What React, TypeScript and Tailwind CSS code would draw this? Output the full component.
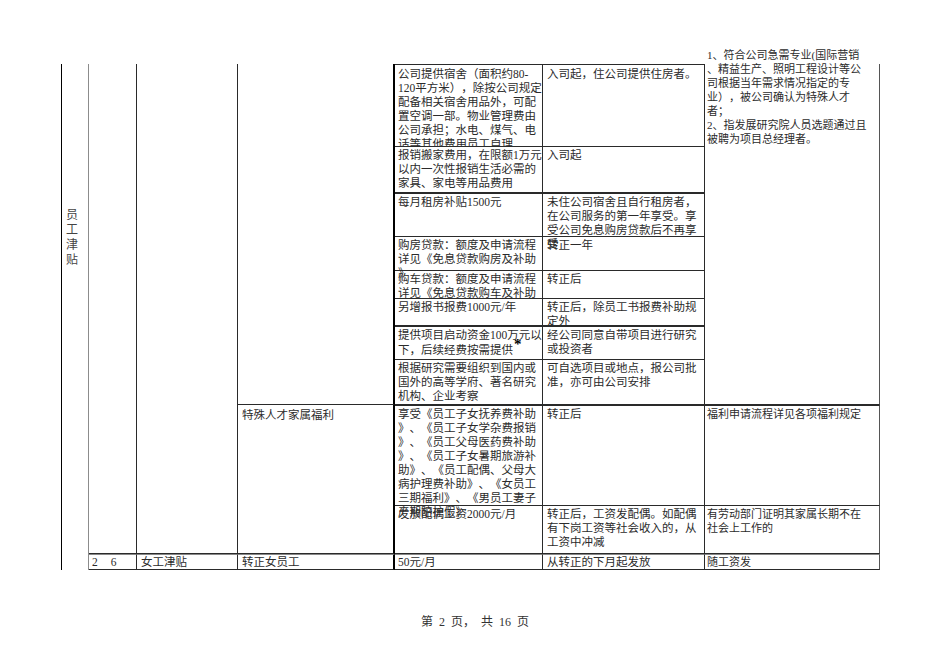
import React from "react";

const F = { fontFamily: '"Liberation Serif", "Noto Sans CJK SC", serif' };

function Lines({ lines, className = "" }: { lines: React.ReactNode[]; className?: string }) {
  return (
    <div className={"whitespace-nowrap " + className}>
      {lines.map((l, i) => (
        <div key={i} className="h-[14px] leading-[14px]">
          {l}
        </div>
      ))}
    </div>
  );
}

const B = "border-[#2a2a2a]";

export default function App() {
  return (
    <div
      className="w-[950px] h-[672px] bg-white text-[#2b2b2b] text-[11.5px] overflow-hidden [text-spacing-trim:space-all]"
      style={F}
    >
      <div className="pt-[64px] pl-[61px]">
        <div className="grid grid-cols-[28px_48px_101px_157px_148px_162px_175px] grid-rows-[83px_46px_44px_34px_28px_27px_34px_45px_101px_48px_16px]">
          {/* col 1 */}
          <div className="col-start-1 row-start-1 row-span-11 border-l border-l-black border-r border-r-[#8c8c8c] flex flex-col items-center pt-[144px] pr-[6px] text-[12px] leading-[15px] text-[#444]">
            <span>员</span>
            <span>工</span>
            <span>津</span>
            <span>贴</span>
          </div>
          {/* col 2,3 empty */}
          <div className={`col-start-2 row-start-1 row-span-10 border-r border-b ${B}`} />
          <div className={`col-start-3 row-start-1 row-span-10 border-r border-b ${B}`} />
          {/* col 4 */}
          <div className={`col-start-4 row-start-1 row-span-8 border-r-2 border-r-black border-b ${B}`} />
          <div className={`col-start-4 row-start-9 row-span-2 border-r-2 border-r-black border-b ${B} pl-[4px] pt-[3px]`}>
            <Lines lines={["特殊人才家属福利"]} />
          </div>

          {/* col 5/6 rows */}
          <div className={`col-start-5 row-start-1 border-t border-r border-b ${B} pl-[3px] pt-[2px] overflow-hidden`}>
            <Lines
              lines={[
                "公司提供宿舍（面积约80-",
                "120平方米），除按公司规定",
                "配备相关宿舍用品外，可配",
                "置空调一部。物业管理费由",
                "公司承担；水电、煤气、电",
                "话等其他费用员工自理",
              ]}
            />
          </div>
          <div className={`col-start-6 row-start-1 border-t border-r border-b ${B} pl-[4px] pt-[2px]`}>
            <Lines lines={["入司起，住公司提供住房者。"]} />
          </div>

          <div className={`col-start-5 row-start-2 border-r border-b ${B} pl-[3px] pt-[1px]`}>
            <Lines lines={["报销搬家费用，在限额1万元", "以内一次性报销生活必需的", "家具、家电等用品费用"]} />
          </div>
          <div className={`col-start-6 row-start-2 border-r border-b ${B} pl-[4px] pt-[1px]`}>
            <Lines lines={["入司起"]} />
          </div>

          <div className={`col-start-5 row-start-3 border-t border-r border-b ${B} pl-[3px] pt-[1px]`}>
            <Lines lines={["每月租房补贴1500元"]} />
          </div>
          <div className={`col-start-6 row-start-3 border-t border-r border-b ${B} pl-[4px] pt-[1px]`}>
            <Lines
              lines={["未住公司宿舍且自行租房者，", "在公司服务的第一年享受。享", "受公司免息购房贷款后不再享", "受"]}
            />
          </div>

          <div className={`col-start-5 row-start-4 border-r border-b ${B} pl-[3px] pt-[1px]`}>
            <Lines lines={["购房贷款：额度及申请流程", "详见《免息贷款购房及补助", "》"]} />
          </div>
          <div className={`col-start-6 row-start-4 border-r border-b ${B} pl-[4px] pt-[1px]`}>
            <Lines lines={["转正一年"]} />
          </div>

          <div className={`col-start-5 row-start-5 border-r border-b ${B} pl-[3px] pt-[1px]`}>
            <Lines lines={["购车贷款：额度及申请流程", "详见《免息贷款购车及补助"]} />
          </div>
          <div className={`col-start-6 row-start-5 border-r border-b ${B} pl-[4px] pt-[1px]`}>
            <Lines lines={["转正后"]} />
          </div>

          <div className={`col-start-5 row-start-6 border-r border-b ${B} pl-[3px] pt-[1px]`}>
            <Lines lines={["另增报书报费1000元/年"]} />
          </div>
          <div className={`col-start-6 row-start-6 border-r border-b ${B} pl-[4px] pt-[1px]`}>
            <Lines lines={["转正后，除员工书报费补助规", "定外"]} />
          </div>

          <div className={`col-start-5 row-start-7 border-t border-r border-b ${B} pl-[3px] pt-[1px]`}>
            <Lines
              lines={[
                "提供项目启动资金100万元以",
                <>
                  下，后续经费按需提供
                  <span className="relative top-[-5px] ml-[1px] text-[15px] font-bold text-black">*</span>
                </>,
              ]}
            />
          </div>
          <div className={`col-start-6 row-start-7 border-t border-r border-b ${B} pl-[4px] pt-[1px]`}>
            <Lines lines={["经公司同意自带项目进行研究", "或投资者"]} />
          </div>

          <div className={`col-start-5 row-start-8 border-r border-b ${B} pl-[3px] pt-[1px]`}>
            <Lines lines={["根据研究需要组织到国内或", "国外的高等学府、著名研究", "机构、企业考察"]} />
          </div>
          <div className={`col-start-6 row-start-8 border-r border-b ${B} pl-[4px] pt-[1px]`}>
            <Lines lines={["可自选项目或地点，报公司批", "准，亦可由公司安排"]} />
          </div>

          <div className={`col-start-5 row-start-9 border-t border-r border-b ${B} pl-[3px] pt-[1px]`}>
            <Lines
              lines={[
                "享受《员工子女抚养费补助",
                "》、《员工子女学杂费报销",
                "》、《员工父母医药费补助",
                "》、《员工子女暑期旅游补",
                "助》、《员工配偶、父母大",
                "病护理费补助》、《女员工",
                "三期福利》、《男员工妻子",
                "产期陪护假》",
              ]}
            />
          </div>
          <div className={`col-start-6 row-start-9 border-t border-r border-b ${B} pl-[4px] pt-[1px]`}>
            <Lines lines={["转正后"]} />
          </div>

          <div className={`col-start-5 row-start-10 border-r border-b ${B} pl-[3px] pt-[1px]`}>
            <Lines lines={["发放配偶工资2000元/月"]} />
          </div>
          <div className={`col-start-6 row-start-10 border-r border-b ${B} pl-[4px] pt-[1px]`}>
            <Lines lines={["转正后，工资发配偶。如配偶", "有下岗工资等社会收入的，从", "工资中冲减"]} />
          </div>

          {/* col 7 */}
          <div className={`col-start-7 row-start-1 row-span-8 border-r border-r-[#555] border-b ${B} pl-[2px] text-[11px]`}>
            <div className="mt-[-16px]">
              <Lines
                lines={[
                  "1、符合公司急需专业(国际营销",
                  "、精益生产、照明工程设计等公",
                  "司根据当年需求情况指定的专",
                  "业），被公司确认为特殊人才",
                  "者；",
                  "2、指发展研究院人员选题通过且",
                  "被聘为项目总经理者。",
                ]}
              />
            </div>
          </div>
          <div className={`col-start-7 row-start-9 border-t border-r border-r-[#555] border-b ${B} pl-[2px] pt-[1px] text-[11px]`}>
            <Lines lines={["福利申请流程详见各项福利规定"]} />
          </div>
          <div className={`col-start-7 row-start-10 border-r border-r-[#555] border-b ${B} pl-[2px] pt-[1px] text-[11px]`}>
            <Lines lines={["有劳动部门证明其家属长期不在", "社会上工作的"]} />
          </div>

          {/* last row */}
          <div className={`col-start-2 row-start-11 border-t border-t-[#888] border-r border-b ${B} pl-[3px] leading-[14px] flex`}>
            <span>2</span>
            <span className="ml-[13px]">6</span>
          </div>
          <div className={`col-start-3 row-start-11 border-t border-t-[#888] border-r border-b ${B} pl-[4px] leading-[14px] whitespace-nowrap`}>
            女工津贴
          </div>
          <div className={`col-start-4 row-start-11 border-t border-t-[#888] border-r-2 border-r-black border-b ${B} pl-[4px] leading-[14px] whitespace-nowrap`}>
            转正女员工
          </div>
          <div className={`col-start-5 row-start-11 border-t border-t-[#888] border-r border-b ${B} pl-[3px] leading-[14px] whitespace-nowrap`}>
            50元/月
          </div>
          <div className={`col-start-6 row-start-11 border-t border-t-[#888] border-r border-b ${B} pl-[4px] leading-[14px] whitespace-nowrap`}>
            从转正的下月起发放
          </div>
          <div className={`col-start-7 row-start-11 border-t border-t-[#888] border-r border-r-[#555] border-b ${B} pl-[2px] leading-[14px] whitespace-nowrap text-[11px]`}>
            随工资发
          </div>
        </div>
      </div>
      <div className="mt-[45px] flex justify-center gap-[6px] text-[12px] leading-[14px] text-[#333]">
        <span>第</span>
        <span>2</span>
        <span>页，</span>
        <span>共</span>
        <span>16</span>
        <span>页</span>
      </div>
    </div>
  );
}
